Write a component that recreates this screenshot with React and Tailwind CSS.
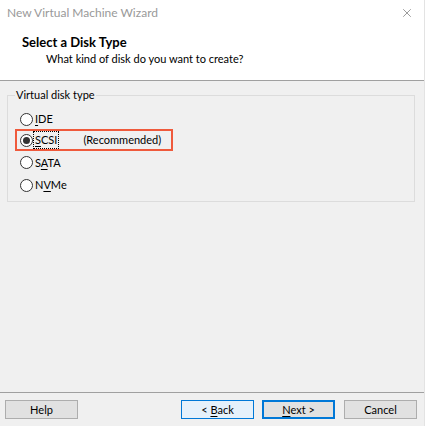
import { X } from 'lucide-react'

function Mn({ children }) {
  return <span className="underline underline-offset-[2px] decoration-[1px]">{children}</span>
}

function Circle({ checked }) {
  return (
    <span className="w-[13px] h-[13px] shrink-0 rounded-full border border-[#333333] bg-white flex items-center justify-center">
      {checked && <span className="w-[7px] h-[7px] rounded-full bg-[#333333]" />}
    </span>
  )
}

function Radio({ children, tall }) {
  return (
    <div className={`flex items-center ${tall ? 'h-[23px]' : 'h-[22px]'}`}>
      <Circle />
      <span className="ml-[2px] text-black">{children}</span>
    </div>
  )
}

function Btn({ children, variant }) {
  const styles = {
    plain: 'border border-[#adadad] bg-[#e1e1e1]',
    hover: 'border border-[#0078d7] bg-[#e5f1fb]',
    def: 'border-2 border-[#0078d7] bg-[#e1e1e1]',
  }
  return (
    <button className={`w-[73px] h-[19px] flex items-center justify-center text-black ${styles[variant]}`}>
      <span>{children}</span>
    </button>
  )
}

export default function App() {
  return (
    <div className="w-[425px] h-[426px] bg-[#f0f0f0] flex flex-col text-[11px] leading-[16px] font-['Lato','Liberation_Sans',sans-serif] border-r border-[#e3e3e3]">
      <div className="h-[81px] bg-white border-b border-[#a0a0a0] flex flex-col">
        <div className="h-[26px] flex items-center justify-between pl-[7px] pr-[10px]">
          <span className="text-[12px] text-[#999999]">New Virtual Machine Wizard</span>
          <X size={14} strokeWidth={1} className="text-[#555555]" />
        </div>
        <div className="pl-[22px] pt-[8px] text-[13px] font-bold text-black">Select a Disk Type</div>
        <div className="pl-[46px] pt-[1px] text-black">What kind of disk do you want to create?</div>
      </div>

      <div className="flex-1 px-[7px] pt-[6px]">
        <fieldset className="border border-[#dcdcdc] w-[408px] h-[115px] pl-[12px] pr-[8px]">
          <legend className="-ml-[5px] px-[1px] text-black">Virtual disk type</legend>
          <div className="flex flex-col pt-[5px]">
            <Radio><Mn>I</Mn>DE</Radio>
            <div className="-ml-[5px] -mt-[1px] w-[158px] h-[22px] border-2 border-[#ef5a3c] flex items-center pl-[3px]">
              <Circle checked />
              <span className="ml-[1px] px-[1px] outline outline-1 outline-dotted outline-black text-black"><Mn>S</Mn>CSI</span>
              <span className="ml-[25px] text-black">(Recommended)</span>
            </div>
            <Radio tall>S<Mn>A</Mn>TA</Radio>
            <Radio>N<Mn>V</Mn>Me</Radio>
          </div>
        </fieldset>
      </div>

      <div className="h-[34px] border-t border-[#a0a0a0] flex items-start pt-[7px] pl-[5px] pr-[7px]">
        <Btn variant="plain">Help</Btn>
        <div className="flex-1" />
        <Btn variant="hover">&lt; <Mn>B</Mn>ack</Btn>
        <div className="w-[8px]" />
        <Btn variant="def"><Mn>N</Mn>ext &gt;</Btn>
        <div className="w-[9px]" />
        <Btn variant="plain">Cancel</Btn>
      </div>
    </div>
  )
}
